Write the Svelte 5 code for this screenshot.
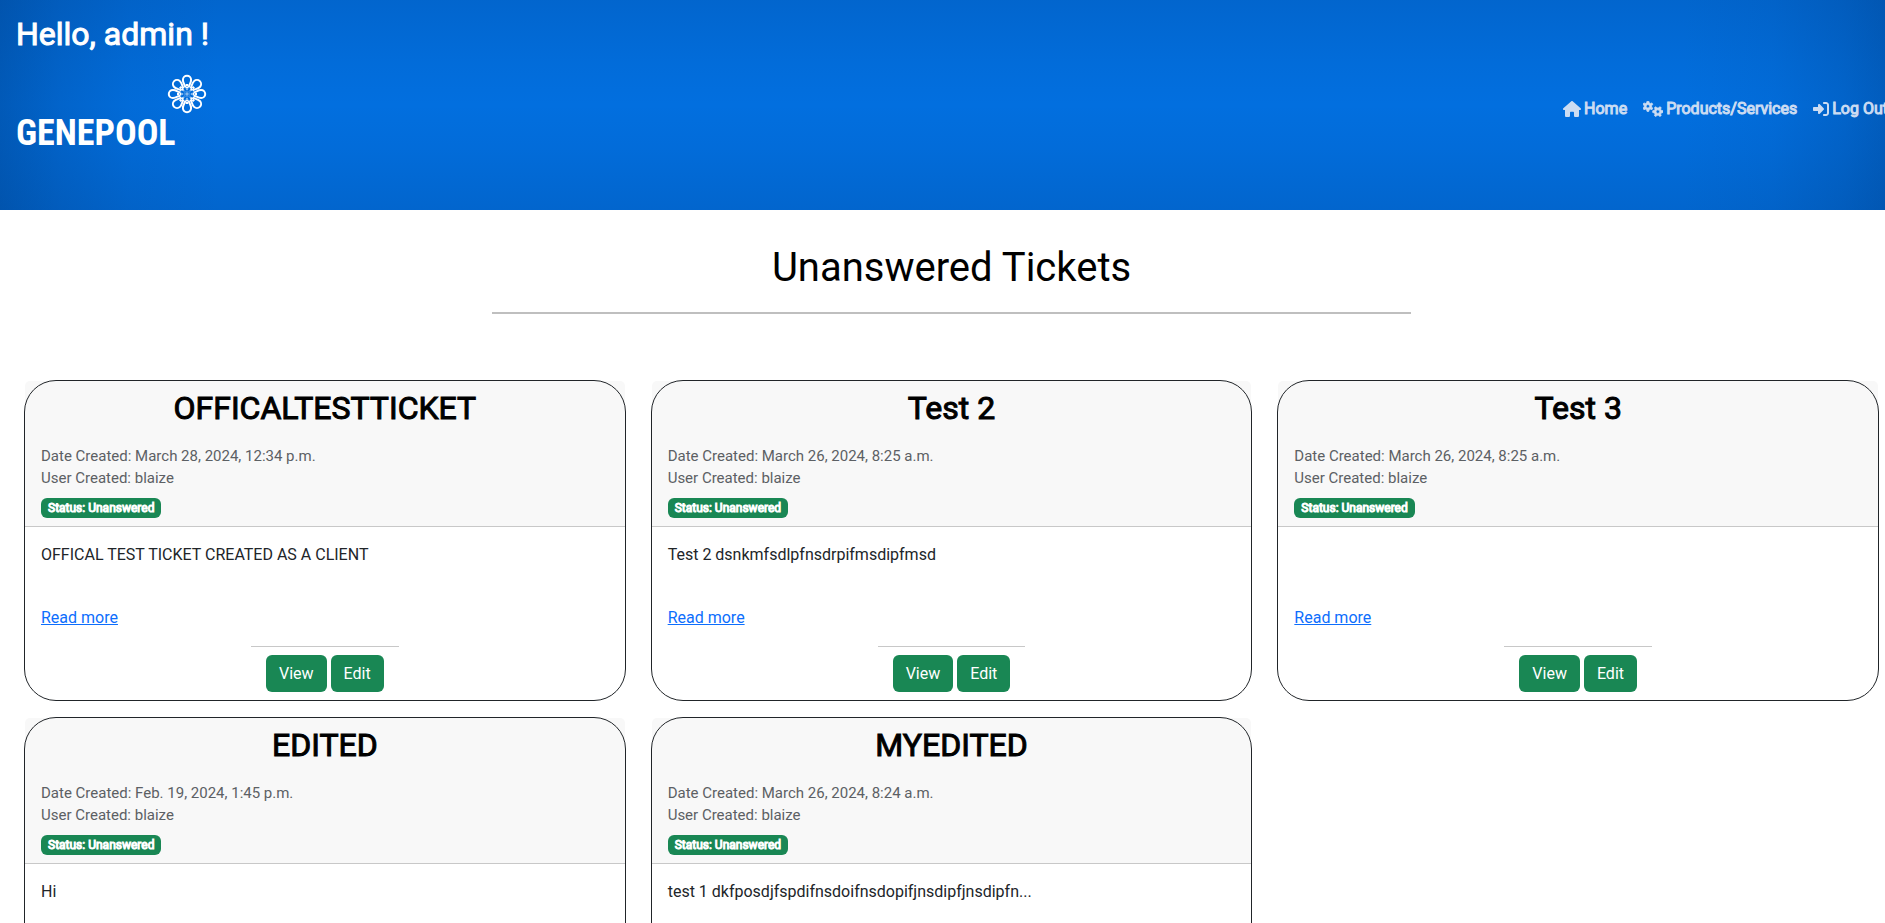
<script>
  const tickets = [
    { title: 'OFFICALTESTTICKET', date: 'March 28, 2024, 12:34 p.m.', user: 'blaize', text: 'OFFICAL TEST TICKET CREATED AS A CLIENT' },
    { title: 'Test 2', date: 'March 26, 2024, 8:25 a.m.', user: 'blaize', text: 'Test 2 dsnkmfsdlpfnsdrpifmsdipfmsd' },
    { title: 'Test 3', date: 'March 26, 2024, 8:25 a.m.', user: 'blaize', text: '' },
    { title: 'EDITED', date: 'Feb. 19, 2024, 1:45 p.m.', user: 'blaize', text: 'Hi' },
    { title: 'MYEDITED', date: 'March 26, 2024, 8:24 a.m.', user: 'blaize', text: 'test 1 dkfposdjfspdifnsdoifnsdopifjnsdipfjnsdipfn...' }
  ];
  const petals = [0, 45, 90, 135, 180, 225, 270, 315];
  const gear = 'M150 0h44l10 42 28 16 41-13 22 38-31 30v32l31 30-22 38-41-13-28 16-10 42h-44l-10-42-28-16-41 13-22-38 31-30v-32l-31-30 22-38 41 13 28-16zM172 85a44 44 0 1 0 0 88a44 44 0 1 0 0-88z';
</script>

<div class="page">
  <header>
    <p class="hello">Hello, admin !</p>
    <div class="bar">
      <a class="logo" href="#home" aria-label="GENEPOOL">
        <span>GENEPOOL</span>
        <svg class="flower" viewBox="-20 -20 40 40" aria-hidden="true">
          {#each petals as angle}
            <g transform="rotate({angle})">
              <path d="M-1.700 -6.500C-1.700 -9 -4.100 -10.500 -4.100 -14.100A4.100 4.100 0 0 1 4.100 -14.100C4.100 -10.500 1.700 -9 1.700 -6.500" fill="none" stroke="#fff" stroke-width="2" />
              <path d="M0 -10V-5.500" stroke="#fff" stroke-width="2.600" stroke-dasharray="2 .5" />
              <path d="M0 -5V-2.600" stroke="#fff" stroke-width="1" stroke-dasharray="1 .8" />
            </g>
          {/each}
          <rect x="-1" y="-1" width="2" height="2" fill="none" stroke="#fff" stroke-width=".6" />
        </svg>
      </a>
      <nav>
        <a href="#home">
          <svg width="18" height="16" viewBox="0 0 576 512" aria-hidden="true"><path d="M575.8 255.5c0 18-15 32.1-32 32.1h-32l.7 160.2c0 2.700-.2 5.400-.5 8.100V472c0 22.100-17.900 40-40 40H392c-22.100 0-40-17.900-40-40V376c0-17.700-14.300-32-32-32H256c-17.700 0-32 14.300-32 32v96c0 22.100-17.900 40-40 40H104c-22.100 0-40-17.900-40-40V287.600H32c-18 0-32-14-32-32.100c0-9 3-17 10-24L266.400 8c7-7 15-8 22-8s15 2 21 7L564.800 231.500c8 7 12 15 11 24z" /></svg>
          Home
        </a>
        <a href="#products">
          <svg width="20" height="16" viewBox="0 0 640 512" aria-hidden="true">
            <g stroke="#ccdcf2" stroke-width="18" stroke-linejoin="round">
              <path fill-rule="evenodd" d={gear} transform="translate(-63 4) scale(1.28)" />
              <path fill-rule="evenodd" d={gear} transform="translate(640 120) rotate(90) scale(1.28)" />
            </g>
          </svg>
          Products/Services
        </a>
        <a href="#logout">
          <svg width="16" height="16" viewBox="0 0 512 512" aria-hidden="true"><path d="M217.900 105.900L340.700 228.700c7.200 7.200 11.300 17.100 11.300 27.300s-4.100 20.100-11.300 27.300L217.900 406.100c-6.400 6.400-15 9.900-24 9.900c-18.700 0-33.900-15.200-33.900-33.900V320H32c-17.700 0-32-14.300-32-32V224c0-17.700 14.300-32 32-32H160V129.900c0-18.700 15.200-33.900 33.900-33.900c9 0 17.600 3.600 24 9.900zM352 416h64c17.700 0 32-14.300 32-32V128c0-17.700-14.300-32-32-32H352c-17.700 0-32-14.300-32-32s14.300-32 32-32h64c53 0 96 43 96 96V384c0 53-43 96-96 96H352c-17.700 0-32-14.300-32-32s14.300-32 32-32z" /></svg>
          Log Out
        </a>
      </nav>
    </div>
  </header>

  <main>
    <h1>Unanswered Tickets</h1>
    <hr class="rule" />
    <section class="grid">
      {#each tickets as t}
        <article class="card">
          <div class="head">
            <h2>{t.title}</h2>
            <p class="meta">Date Created: {t.date}<br />User Created: {t.user}</p>
            <span class="badge">Status: Unanswered</span>
          </div>
          <div class="body">
            <p class="text">{t.text}</p>
            <a class="more" href="#ticket">Read more</a>
            <hr class="short" />
            <div class="actions">
              <button type="button">View</button>
              <button type="button">Edit</button>
            </div>
          </div>
        </article>
      {/each}
    </section>
  </main>
</div>

<style>
  :global(html) { overflow: hidden; }
  :global(body) { margin: 0; background: #fff; }
  * { box-sizing: border-box; }
  .page {
    width: calc(100% + 18px);
    font: 400 16px/24px Roboto, sans-serif;
    color: #212529;
  }
  header {
    height: 210px;
    padding: 15px 15px 0 16px;
    color: #fff;
    background:
      linear-gradient(to right, rgba(0, 60, 130, .42), rgba(0, 60, 130, .22) 60px, rgba(0, 60, 130, .07) 130px, transparent 220px),
      linear-gradient(to left, rgba(0, 60, 130, .42), rgba(0, 60, 130, .22) 60px, rgba(0, 60, 130, .07) 130px, transparent 220px),
      linear-gradient(rgba(0, 60, 130, .19), rgba(0, 60, 130, .06) 30%, transparent 50%, rgba(0, 60, 130, .06) 70%, rgba(0, 60, 130, .19)),
      #026fdf;
  }
  .hello {
    margin: 0;
    font-size: 32px;
    line-height: 38px;
    -webkit-text-stroke: 1px #fff;
  }
  .bar { display: flex; justify-content: space-between; align-items: flex-start; padding-top: 21px; }
  .logo { display: flex; align-items: flex-start; color: #fff; text-decoration: none; }
  .logo span {
    width: 151px;
    padding-top: 39px;
    font: 700 36px/40px "Liberation Sans Narrow", "Roboto Condensed", sans-serif;
    white-space: nowrap;
  }
  .flower { width: 40px; height: 40px; }
  nav { display: flex; gap: 16px; padding-top: 23px; }
  nav a {
    display: flex;
    align-items: center;
    gap: 3px;
    color: #ccdcf2;
    text-decoration: none;
    white-space: nowrap;
    -webkit-text-stroke: 1px #ccdcf2;
  }
  nav svg { fill: #ccdcf2; stroke: none; }
  main { padding: 34px 24px 0; }
  h1 {
    margin: 0;
    font-size: 40px;
    font-weight: 400;
    line-height: 48px;
    text-align: center;
    color: #000;
  }
  .rule { width: 919px; max-width: 100%; height: 2px; margin: 20px auto 66px; border: 0; background: #bfbfbf; }
  .grid { display: grid; grid-template-columns: repeat(3, minmax(0, 1fr)); gap: 16px 25px; }
  .card { position: relative; border: 1px solid #212529; border-radius: 32px; }
  /* The square-cornered header sits beneath the card's rounded outline. */
  .head {
    position: relative;
    z-index: -1;
    padding: 8px 16px;
    border-bottom: 1px solid #c8c8c8;
    border-radius: 5px 5px 0 0;
    background: #f8f8f8;
  }
  h2 {
    margin: 0 0 18px;
    font-size: 32px;
    font-weight: 400;
    line-height: 38px;
    text-align: center;
    color: #000;
    -webkit-text-stroke: 1px #000;
  }
  .meta { margin: 0 0 9px; font-size: 15px; line-height: 22px; color: #5c6064; }
  .badge {
    display: block;
    width: fit-content;
    padding: 4px 7px;
    border-radius: 6px;
    background: #198754;
    color: #fff;
    font-size: 12px;
    line-height: 12px;
    -webkit-text-stroke: 1px #fff;
  }
  .body { padding: 16px 16px 8px; }
  .text { min-height: 24px; margin: 0 0 39px; }
  .more { display: block; width: fit-content; color: #0d6efd; text-decoration: underline; }
  .short { width: 26%; height: 1px; margin: 16px auto 8px; border: 0; background: #c8c8c8; }
  .actions { display: flex; justify-content: center; gap: 4px; }
  button {
    padding: 7px 13px;
    border: 0;
    border-radius: 6px;
    background: #198754;
    color: #fff;
    font: inherit;
    line-height: 23px;
  }
</style>
